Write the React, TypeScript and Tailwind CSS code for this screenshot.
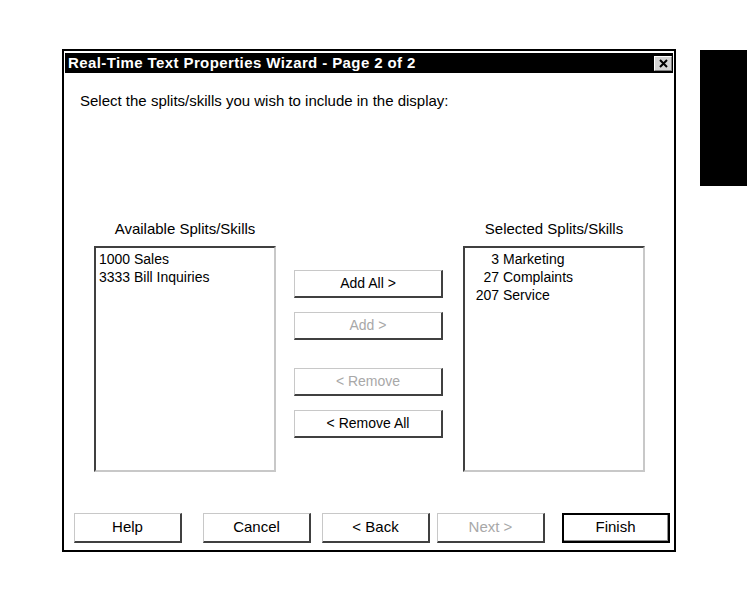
const FONT = "font-['Liberation_Sans',Arial,sans-serif]";

function Btn({
  label,
  disabled,
  isDefault,
  className = "",
}: {
  label: string;
  disabled?: boolean;
  isDefault?: boolean;
  className?: string;
}) {
  return (
    <div
      className={`flex items-center justify-center bg-white ${
        isDefault
          ? "border-2 border-black"
          : "border border-t-[#c8c8c8] border-l-[#c8c8c8] border-r-2 border-b-2 border-r-[#404040] border-b-[#404040]"
      } ${disabled ? "text-[#a8a8a8]" : "text-black"} ${className}`}
    >
      {isDefault ? (
        <div className="flex h-full w-full items-center justify-center border-r border-b border-[#909090]">
          {label}
        </div>
      ) : (
        label
      )}
    </div>
  );
}

type Item = { num: string; name: string };

function ListBox({
  items,
  numWidth,
  pad,
}: {
  items: Item[];
  numWidth: string;
  pad: string;
}) {
  return (
    <div
      className={`h-[226px] w-[182px] border-2 border-t-[#404040] border-l-[#404040] border-r-[#c8c8c8] border-b-[#c8c8c8] bg-white pt-[2px] text-[14px] leading-[18px] text-black ${pad}`}
    >
      {items.map((it) => (
        <div key={it.num} className="flex">
          <span className={`${numWidth} text-right`}>{it.num}</span>
          <span className="ml-[4px]">{it.name}</span>
        </div>
      ))}
    </div>
  );
}

export default function App() {
  return (
    <div className={`relative h-[599px] w-[747px] bg-white ${FONT}`}>
      <div className="flex items-start">
        <div className="ml-[62px] mt-[49px] flex w-[614px] flex-col border-2 border-black px-[1px] pb-[7px] pt-[2px]">
          <div className="flex h-[20px] items-center justify-between bg-black pl-[3px] pr-[1px]">
            <span className="text-[15px] font-bold tracking-[0.4px] text-white">
              Real-Time Text Properties Wizard - Page 2 of 2
            </span>
            <div className="flex h-[15px] w-[18px] items-center justify-center border border-t-white border-l-white border-r-[#808080] border-b-[#808080] bg-[#d4d4d4]">
              <svg width="9" height="9" viewBox="0 0 9 9">
                <path d="M1 1L8 8M8 1L1 8" stroke="black" strokeWidth="2" />
              </svg>
            </div>
          </div>
          <div className="pl-[15px] pt-[19px] text-[15px] leading-[18px] text-black">
            Select the splits/skills you wish to include in the display:
          </div>
          <div className="mt-[110px] flex pl-[29px]">
            <div className="flex flex-col items-center">
              <div className="mb-[8px] text-[15px] leading-[18px]">
                Available Splits/Skills
              </div>
              <ListBox
                pad="pl-[3px]"
                numWidth="w-[31px]"
                items={[
                  { num: "1000", name: "Sales" },
                  { num: "3333", name: "Bill Inquiries" },
                ]}
              />
            </div>
            <div className="ml-[18px] mt-[50px] flex flex-col text-[14px]">
              <Btn label="Add All >" className="h-[28px] w-[149px]" />
              <Btn label="Add >" disabled className="mt-[14px] h-[28px] w-[149px]" />
              <Btn label="< Remove" disabled className="mt-[28px] h-[28px] w-[149px]" />
              <Btn label="< Remove All" className="mt-[14px] h-[28px] w-[149px]" />
            </div>
            <div className="ml-[20px] flex flex-col items-center">
              <div className="mb-[8px] text-[15px] leading-[18px]">
                Selected Splits/Skills
              </div>
              <ListBox
                pad="pl-[10px]"
                numWidth="w-[24px]"
                items={[
                  { num: "3", name: "Marketing" },
                  { num: "27", name: "Complaints" },
                  { num: "207", name: "Service" },
                ]}
              />
            </div>
          </div>
          <div className="mt-[41px] flex pl-[9px] text-[15px]">
            <Btn label="Help" className="h-[30px] w-[108px]" />
            <Btn label="Cancel" className="ml-[21px] h-[30px] w-[108px]" />
            <Btn label="< Back" className="ml-[11px] h-[30px] w-[108px]" />
            <Btn label="Next >" disabled className="ml-[7px] h-[30px] w-[108px]" />
            <Btn label="Finish" isDefault className="ml-[17px] h-[30px] w-[108px]" />
          </div>
        </div>
        <div className="ml-auto mt-[50px] h-[136px] w-[47px] bg-black" />
      </div>
    </div>
  );
}
